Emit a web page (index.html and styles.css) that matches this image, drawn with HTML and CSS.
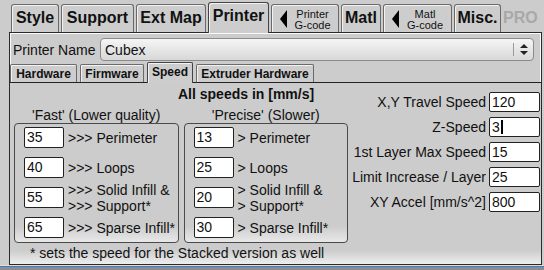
FILE: index.html
```html
<!DOCTYPE html>
<html lang="en">
<head>
  <meta charset="UTF-8" />
  <title>Printer settings</title>
  <link rel="stylesheet" href="styles.css">
</head>
<body>

  <div class="tabs">
    <div class="tab w-style">Style</div>
    <div class="tab w-support">Support</div>
    <div class="tab w-extmap">Ext Map</div>
    <div class="tab tab-active w-printer">Printer</div>
    <div class="tab tab-gcode w-pgcode">
      <svg class="arrow" width="7" height="18" viewBox="0 0 7 18"><path d="M7 0V18L0 9Z" fill="#000"/></svg>
      <span class="gcode-text">Printer<br>G-code</span>
    </div>
    <div class="tab w-matl">Matl</div>
    <div class="tab tab-gcode w-mgcode">
      <svg class="arrow" width="7" height="18" viewBox="0 0 7 18"><path d="M7 0V18L0 9Z" fill="#000"/></svg>
      <span class="gcode-text">Matl<br>G-code</span>
    </div>
    <div class="tab w-misc">Misc.</div>
    <div class="tab-pro">PRO</div>
  </div>

  <div class="panel">
    <div class="name-row">
      <span class="name-label">Printer Name</span>
      <div class="select">
        <span class="select-value">Cubex</span>
        <span class="select-arrows">
          <svg width="8" height="11" viewBox="0 0 8 11"><path d="M4 0L8 4H0Z M0 7H8L4 11Z" fill="#222"/></svg>
        </span>
      </div>
    </div>

    <div class="subtabs">
      <div class="subtab w-hardware">Hardware</div>
      <div class="subtab w-firmware">Firmware</div>
      <div class="subtab subtab-active w-speed">Speed</div>
      <div class="subtab w-extruder">Extruder Hardware</div>
    </div>

    <div class="speed-page">
      <div class="left">
        <div class="title">All speeds in [mm/s]</div>
        <div class="heads">
          <div class="head">'Fast' (Lower quality)</div>
          <div class="head">'Precise' (Slower)</div>
        </div>
        <div class="boxes">
          <div class="group">
            <div class="row"><span class="field">35</span><span class="lbl">&gt;&gt;&gt; Perimeter</span></div>
            <div class="row"><span class="field">40</span><span class="lbl">&gt;&gt;&gt; Loops</span></div>
            <div class="row"><span class="field">55</span><span class="lbl">&gt;&gt;&gt; Solid Infill &amp;<br>&gt;&gt;&gt; Support*</span></div>
            <div class="row"><span class="field">65</span><span class="lbl">&gt;&gt;&gt; Sparse Infill*</span></div>
          </div>
          <div class="group">
            <div class="row"><span class="field">13</span><span class="lbl">&gt; Perimeter</span></div>
            <div class="row"><span class="field">25</span><span class="lbl">&gt; Loops</span></div>
            <div class="row"><span class="field">20</span><span class="lbl">&gt; Solid Infill &amp;<br>&gt; Support*</span></div>
            <div class="row"><span class="field">30</span><span class="lbl">&gt; Sparse Infill*</span></div>
          </div>
        </div>
        <div class="note">* sets the speed for the Stacked version as well</div>
      </div>

      <div class="right">
        <div class="rrow"><span>X,Y Travel Speed</span><span class="field rfield">120</span></div>
        <div class="rrow"><span>Z-Speed</span><span class="field rfield">3<span class="caret"></span></span></div>
        <div class="rrow"><span>1st Layer Max Speed</span><span class="field rfield">15</span></div>
        <div class="rrow"><span>Limit Increase / Layer</span><span class="field rfield">25</span></div>
        <div class="rrow"><span>XY Accel [mm/s^2]</span><span class="field rfield">800</span></div>
      </div>
    </div>
  </div>

  <div class="bottombar"></div>

</body>
</html>
```

FILE: styles.css
```css
body {
  margin: 0;
  width: 544px;
  height: 270px;
  overflow: hidden;
  background: #cccccc;
  font-family: "Liberation Sans", Arial, sans-serif;
  font-size: 14px;
  color: #111;
}

/* top tab strip */
.tabs {
  display: flex;
  align-items: flex-end;
  gap: 2px;
  height: 32px;
  padding-left: 11px;
  box-sizing: border-box;
}
.tab {
  box-sizing: border-box;
  height: 28px;
  display: flex;
  align-items: center;
  justify-content: center;
  border: 1px solid #6a6a6a;
  border-bottom: none;
  border-radius: 3px 3px 0 0;
  box-shadow: inset 1px 1px 0 #f2f2f2;
  background: #cdcdcd;
  font-weight: bold;
  font-size: 16px;
  padding-bottom: 1px;
}
.tab-active {
  height: 31px;
  margin-bottom: -1px;
  padding-bottom: 4px;
  position: relative;
  z-index: 1;
  border-color: #444;
}
.tab-gcode {
  justify-content: flex-start;
  padding-left: 8px;
  padding-bottom: 0;
}
.gcode-text {
  flex: 1;
  text-align: center;
  font-size: 11px;
  font-weight: normal;
  line-height: 11px;
  padding-top: 3px;
}
.tab-pro {
  width: 37px;
  height: 28px;
  display: flex;
  align-items: center;
  font-weight: bold;
  font-size: 16px;
  color: #a8a8a8;
  padding-bottom: 1px;
  box-sizing: border-box;
}
.w-style { width: 48px; }
.w-support { width: 73px; }
.w-extmap { width: 70px; }
.w-printer { width: 61px; }
.w-pgcode { width: 68px; }
.w-matl { width: 40px; }
.w-mgcode { width: 69px; }
.w-misc { width: 47px; }

/* main frame */
.panel {
  box-sizing: border-box;
  margin-left: 9px;
  width: 533px;
  height: 233px;
  border: 1px solid #2a2a2a;
  box-shadow: inset 1px 1px 0 #fafafa, inset -1px -1px 0 #fafafa;
  display: flex;
  flex-direction: column;
}

.name-row {
  display: flex;
  align-items: center;
  margin-top: 5px;
  height: 23px;
  padding-left: 3px;
}
.name-label {
  width: 87px;
}
.select {
  box-sizing: border-box;
  width: 434px;
  height: 23px;
  display: flex;
  align-items: center;
  border: 1px solid #8c8c8c;
  border-radius: 4px;
  background: linear-gradient(#f6f6f6, #e6e6e6 50%, #d8d8d8);
}
.select-value {
  flex: 1;
  padding-left: 4px;
}
.select-arrows {
  width: 19px;
  height: 13px;
  border-left: 1px solid #9a9a9a;
  display: flex;
  align-items: center;
  justify-content: center;
}

/* sub tabs */
.subtabs {
  display: flex;
  align-items: flex-end;
  gap: 3px;
  height: 21px;
}
.subtab {
  box-sizing: border-box;
  height: 18px;
  display: flex;
  align-items: center;
  justify-content: center;
  border: 1px solid #6a6a6a;
  border-bottom: none;
  border-radius: 2px 2px 0 0;
  box-shadow: inset 1px 1px 0 #f2f2f2;
  background: #cdcdcd;
  font-weight: bold;
  font-size: 12px;
}
.subtab-active {
  height: 21px;
  margin-bottom: -1px;
  padding-bottom: 3px;
  position: relative;
  z-index: 1;
  border-color: #444;
}
.w-hardware { width: 67px; }
.w-firmware { width: 64px; }
.w-speed { width: 46px; }
.w-extruder { width: 118px; }

/* speed page */
.speed-page {
  flex: 1;
  display: flex;
  border-top: 1px solid #222;
  padding: 3px 1px 0 4px;
  background: linear-gradient(#cccccc calc(100% - 14px), #ededed);
}
.left {
  width: 334px;
}
.title {
  margin-left: 164px;
  font-weight: bold;
  line-height: 17px;
}
.heads {
  display: flex;
  gap: 5px;
  margin-top: 4px;
}
.head {
  width: 165px;
  text-align: center;
  line-height: 16px;
}
.boxes {
  display: flex;
  gap: 5px;
}
.group {
  box-sizing: border-box;
  width: 165px;
  height: 120px;
  border: 1px solid #4a4a4a;
  border-radius: 4px;
  padding: 3px 0 0 9px;
  display: flex;
  flex-direction: column;
  gap: 9px;
  background: linear-gradient(#cccccc calc(100% - 16px), #e8e8e8);
}
.row {
  display: flex;
  align-items: center;
  gap: 4px;
  height: 21px;
}
.lbl {
  line-height: 16px;
  white-space: nowrap;
}
.field {
  box-sizing: border-box;
  width: 40px;
  height: 21px;
  line-height: 19px;
  padding-left: 2px;
  border: 1px solid #222;
  border-radius: 2px;
  background: #fff;
  font-size: 14px;
}
.note {
  margin-top: 2px;
  padding-left: 16px;
  line-height: 16px;
}

.right {
  flex: 1;
  display: flex;
  flex-direction: column;
  align-items: flex-end;
  gap: 5px;
  padding-top: 6px;
}
.rrow {
  display: flex;
  align-items: center;
  gap: 3px;
  height: 20px;
}
.rfield {
  width: 51px;
  height: 20px;
  line-height: 18px;
}
.caret {
  display: inline-block;
  width: 2px;
  height: 14px;
  margin-left: 1px;
  vertical-align: -2px;
  background: #000;
}

.bottombar {
  height: 6px;
  background: linear-gradient(#dcdcdc 0 1px, #3d7cc9 1px 2px, #8d8d8d 2px);
}
```
